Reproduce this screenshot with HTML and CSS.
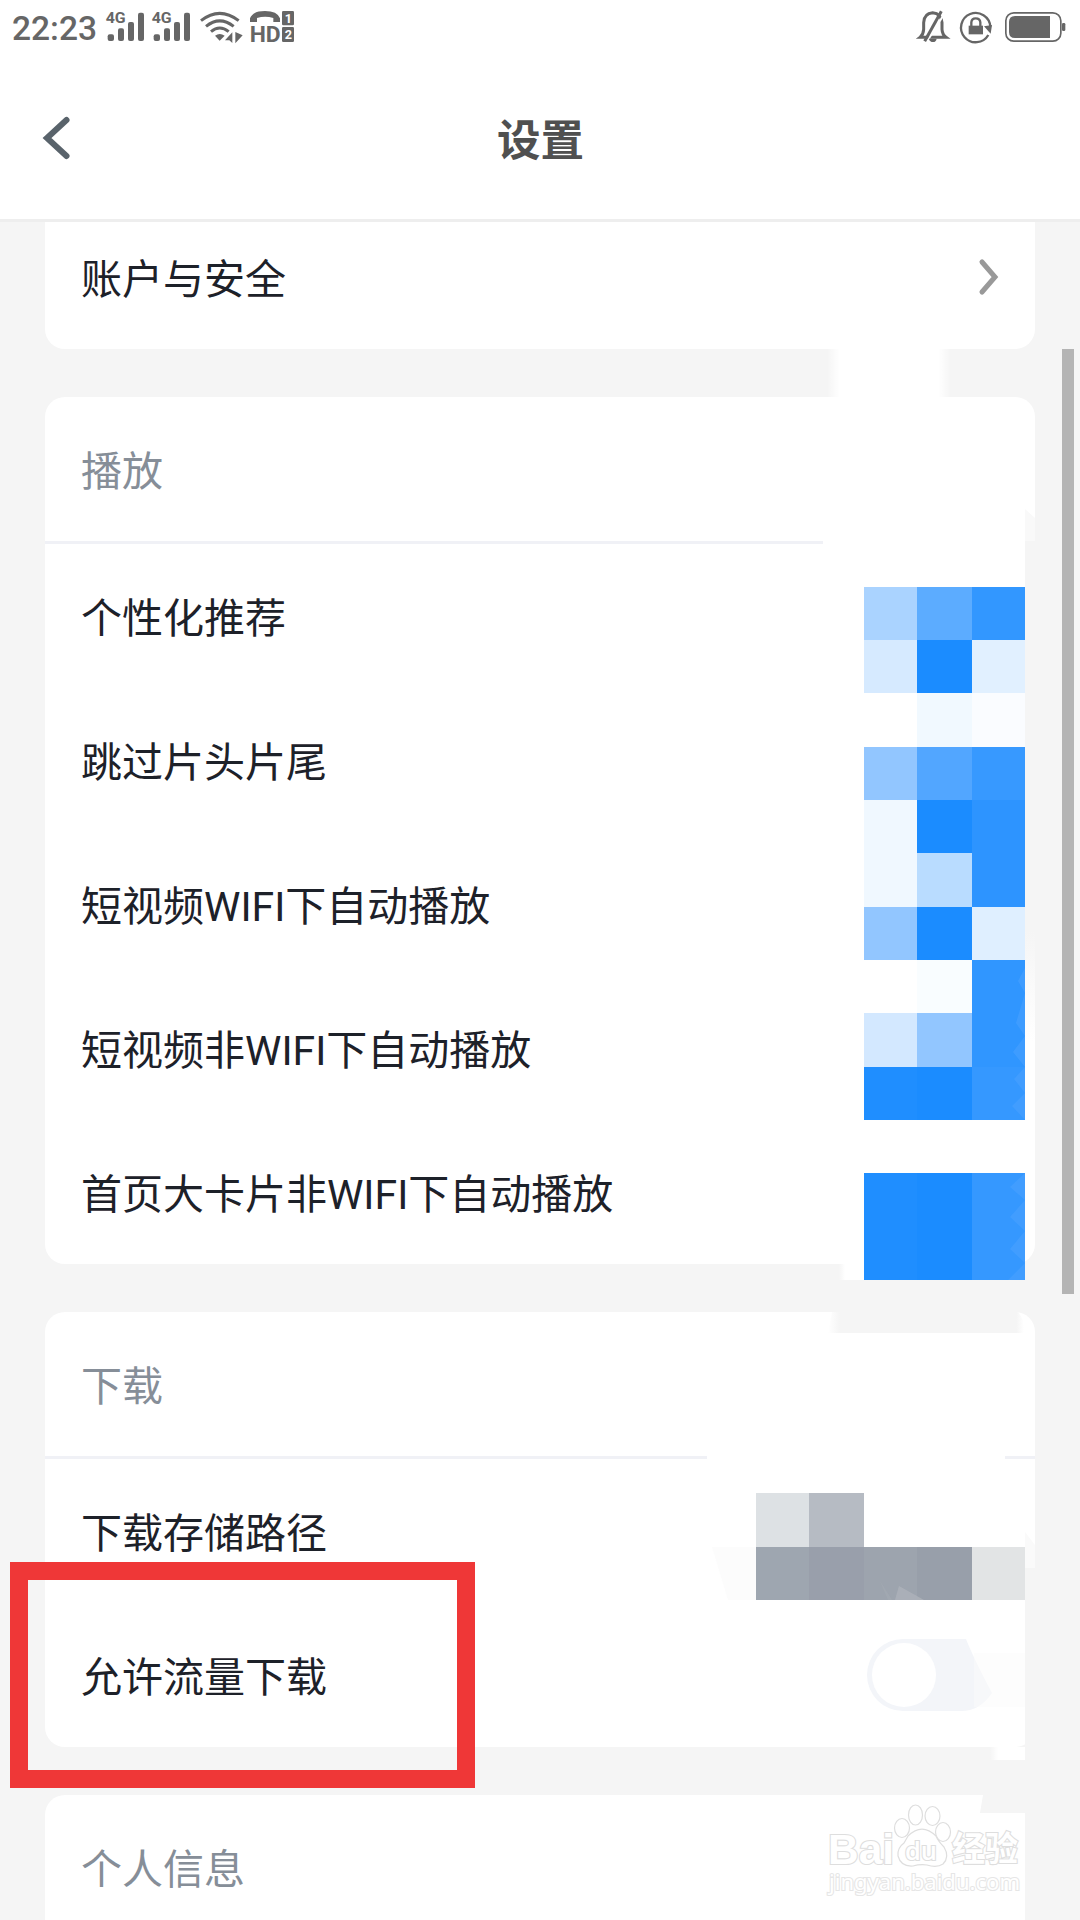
FILE: index.html
```html
<!DOCTYPE html>
<html lang="zh-CN">
<head>
<meta charset="utf-8">
<title>设置</title>
<link rel="stylesheet" href="styles.css">
</head>
<body>
<div class="screen">
  <div class="status">
    <div class="status-left">
      <span class="clock">22:23</span>
      <svg class="signal" viewBox="315 30 120 102">
        <text class="net" x="317" y="70" textLength="60" lengthAdjust="spacingAndGlyphs">4G</text>
        <rect x="323" y="103" width="19" height="20" rx="6"/><rect x="354" y="85" width="18" height="38" rx="6"/><rect x="384" y="66" width="18" height="57" rx="6"/><rect x="414" y="38" width="18" height="85" rx="6"/>
      </svg>
      <svg class="signal" viewBox="453 30 120 102">
        <text class="net" x="455" y="70" textLength="60" lengthAdjust="spacingAndGlyphs">4G</text>
        <rect x="461" y="103" width="19" height="20" rx="6"/><rect x="492" y="85" width="18" height="38" rx="6"/><rect x="522" y="66" width="18" height="57" rx="6"/><rect x="552" y="38" width="18" height="85" rx="6"/>
      </svg>
      <svg class="wifi" viewBox="597 30 135 102">
        <path class="line" d="M603 62Q659 18 716 62M618 79Q659 46 701 79M633 95Q659 73 686 95"/>
        <path d="M645 107Q659 97 674 107L659 122Z"/>
        <path d="M675 121L697 97V129L688 121ZM706 96L728 106L706 130Z"/>
      </svg>
      <svg class="hd" viewBox="747 30 138 102">
        <path d="M750 66V55Q758 33 795 33Q832 33 840 55V66H820V54Q795 46 771 54V66Z"/>
        <text class="hd-text" x="749" y="126" textLength="93" lengthAdjust="spacingAndGlyphs">HD</text>
        <rect x="846" y="33" width="36" height="43" rx="4"/><rect x="846" y="81" width="36" height="45" rx="4"/>
        <text class="sim" x="854" y="69">1</text><text class="sim" x="854" y="118">2</text>
      </svg>
    </div>
    <div class="status-right">
      <svg class="bell" viewBox="51 27 96 105">
        <path class="line" d="M60 112Q70 104 71 88V68Q72 40 98 38Q124 40 126 68V88Q127 104 138 112Z"/>
        <path class="slash-gap" d="M84 120L134 40"/><path class="line" d="M74 124L124 34"/>
        <path d="M86 116H110Q108 126 99 126Q90 126 86 116Z"/>
      </svg>
      <svg class="lock" viewBox="177 30 102 102">
        <path class="ring" d="M265 105A44 44 0 1 1 271 80"/>
        <path d="M252 79L276 75L272 101Z"/><rect x="206" y="77" width="43" height="26"/>
        <path class="ring" d="M214 78V67Q215 55 227 55Q240 55 241 67V78"/>
      </svg>
      <svg class="battery" viewBox="312 33 186 96">
        <rect class="case" x="317.500" y="38.500" width="165" height="85" rx="24"/>
        <path d="M345 48H450V114H345Q327 114 327 96V66Q327 48 345 48Z"/>
        <rect x="486" y="69" width="10" height="24" rx="4"/>
      </svg>
    </div>
  </div>

  <header class="bar">
    <svg class="back" viewBox="0 0 28 44"><path d="M23.500 4L4 22L23.500 40"/></svg>
    <h1>设置</h1>
  </header>

  <main class="content">
    <section class="card card-first">
      <div class="row"><span>账户与安全</span><svg class="chevron" viewBox="0 0 20 36"><path d="M3 3L16 18L3 33"/></svg></div>
    </section>
    <section class="card">
      <h2>播放</h2>
      <div class="row"><span>个性化推荐</span></div>
      <div class="row"><span>跳过片头片尾</span></div>
      <div class="row"><span>短视频WIFI下自动播放</span></div>
      <div class="row"><span>短视频非WIFI下自动播放</span></div>
      <div class="row"><span>首页大卡片非WIFI下自动播放</span></div>
    </section>
    <section class="card">
      <h2>下载</h2>
      <div class="row"><span>下载存储路径</span></div>
      <div class="row"><span>允许流量下载</span><svg class="toggle" viewBox="0 0 132 72"><path d="M36 0H99Q106 18 125 54Q113 72 94 72H36A36 36 0 0 1 36 0Z"/><circle cx="37" cy="36" r="32"/></svg></div>
    </section>
    <section class="card card-last"><h2>个人信息</h2></section>
  </main>

  <div class="scrollbar"></div>

  <svg class="overlay" viewBox="0 0 1080 1920">
    <defs>
      <linearGradient id="edge" x1="0" x2="1" y1="0" y2="0"><stop offset="0" stop-color="#fff" stop-opacity="0"/><stop offset=".1" stop-color="#fff"/><stop offset=".9" stop-color="#fff"/><stop offset="1" stop-color="#fff" stop-opacity="0"/></linearGradient>
      <linearGradient id="left" x1="0" x2="1" y1="0" y2="0"><stop offset="0" stop-color="#fff" stop-opacity="0"/><stop offset="1" stop-color="#fff"/></linearGradient>
      <linearGradient id="grey" x1="0" x2="1" y1="0" y2="0"><stop offset="0" stop-color="#f5f5f5" stop-opacity="0"/><stop offset=".06" stop-color="#f5f5f5"/><stop offset=".96" stop-color="#f5f5f5"/><stop offset="1" stop-color="#f5f5f5" stop-opacity="0"/></linearGradient>
      <linearGradient id="strip" x1="0" x2="0" y1="0" y2="1"><stop offset="0" stop-color="#f5f5f5"/><stop offset="1" stop-color="#f5f5f5" stop-opacity="0"/></linearGradient>
    </defs>
    <rect x="827" y="349" width="124" height="48" fill="url(#edge)"/>
    <rect x="823" y="540" width="202" height="5" fill="#fff"/>
    <path d="M1025 509L1035 518V541H1025Z" fill="#f9f9f9"/>
    <rect x="1025" y="541" width="10" height="390" fill="#f5f5f5"/>
    <rect x="1025" y="931" width="10" height="110" fill="url(#strip)"/>
    <rect x="839" y="1264" width="6" height="16" fill="url(#left)"/><rect x="845" y="1264" width="180" height="16" fill="#fff"/>
    <path d="M832 1312H1018Q1025 1320 1024 1333H828Z" fill="url(#grey)"/>
    <rect x="707" y="1455" width="298" height="5" fill="#fff"/>
    <path d="M1025 1532L1035 1545V1568H1025Z" fill="#fafafa"/>
    <rect x="1025" y="1568" width="11" height="179" fill="#f5f5f5"/>
    <rect x="990" y="1747" width="8" height="13" fill="url(#left)"/><rect x="998" y="1747" width="27" height="13" fill="#fff"/>
    <path d="M983 1795H1036V1920H1025V1813H980Z" fill="#f5f5f5"/>
    <path d="M712 1547H756V1600H728Z" fill="#fcfcfc"/>
    <rect x="974" y="1653" width="51" height="54" fill="#fcfcfc" fill-opacity=".5"/>

    <g shape-rendering="crispEdges">
      <rect x="864" y="587" width="53" height="53" fill="#aad3ff"/><rect x="917" y="587" width="55" height="53" fill="#5cacff"/><rect x="972" y="587" width="53" height="53" fill="#3297ff"/>
      <rect x="864" y="640" width="53" height="53" fill="#d6eaff"/><rect x="917" y="640" width="55" height="53" fill="#1b8cff"/><rect x="972" y="640" width="53" height="53" fill="#e1f0ff"/>
      <rect x="917" y="693" width="55" height="54" fill="#f1f9ff"/><rect x="972" y="693" width="53" height="54" fill="#fafcff"/>
      <rect x="864" y="747" width="53" height="53" fill="#92c6ff"/><rect x="917" y="747" width="55" height="53" fill="#52a6ff"/><rect x="972" y="747" width="53" height="53" fill="#3799ff"/>
      <rect x="864" y="800" width="53" height="107" fill="#f0f8ff"/><rect x="917" y="800" width="55" height="53" fill="#1b8cff"/><rect x="972" y="800" width="53" height="107" fill="#2d94ff"/>
      <rect x="917" y="853" width="55" height="54" fill="#b9dcff"/>
      <rect x="864" y="907" width="53" height="53" fill="#92c6ff"/><rect x="917" y="907" width="55" height="53" fill="#1b8cff"/><rect x="972" y="907" width="53" height="53" fill="#dfefff"/>
      <rect x="917" y="960" width="55" height="53" fill="#f9fdff"/><rect x="972" y="960" width="53" height="107" fill="#3096ff"/>
      <rect x="864" y="1013" width="53" height="54" fill="#d3e8ff"/><rect x="917" y="1013" width="55" height="54" fill="#92c6ff"/>
      <rect x="864" y="1067" width="53" height="53" fill="#1f8eff"/><rect x="917" y="1067" width="55" height="53" fill="#1b8cff"/><rect x="972" y="1067" width="53" height="53" fill="#3598ff"/>
      <rect x="864" y="1173" width="53" height="107" fill="#1f8eff"/><rect x="917" y="1173" width="55" height="107" fill="#1b8cff"/><rect x="972" y="1173" width="53" height="107" fill="#3598ff"/>
      <rect x="756" y="1493" width="53" height="54" fill="#dde1e4"/><rect x="809" y="1493" width="55" height="54" fill="#b6bbc3"/>
      <rect x="756" y="1547" width="53" height="53" fill="#9ea6b0"/><rect x="809" y="1547" width="55" height="53" fill="#999fab"/><rect x="864" y="1547" width="53" height="53" fill="#9da4ae"/><rect x="917" y="1547" width="55" height="53" fill="#989faa"/><rect x="972" y="1547" width="53" height="53" fill="#e2e4e5"/>
    </g>
    <path d="M1025 968L1018 981L1025 993L1016 1023L1025 1036L1013 1052L1025 1067L1014 1079L1025 1093L1012 1106L1025 1120ZM1025 1173L1010 1187L1025 1200L1010 1217L1025 1231L1010 1249L1025 1263L1008 1280H1025Z" fill="#4ba3ff" fill-opacity=".55"/>
    <path d="M895 1600L899 1586L924 1600Z" fill="#adb2ba" fill-opacity=".85"/>
    <path d="M888 1600L880 1581L892 1600Z" fill="#adb2ba" fill-opacity=".3"/>

    <g class="watermark">
      <text class="wm-bold" x="828" y="1864" font-size="42" textLength="66" lengthAdjust="spacingAndGlyphs">Bai</text>
      <ellipse cx="902" cy="1828" rx="7.500" ry="9.500"/><ellipse cx="915.500" cy="1815" rx="7" ry="10"/><ellipse cx="932.500" cy="1816" rx="7.500" ry="9.500"/><ellipse cx="943" cy="1832" rx="7.500" ry="9.500"/>
      <path d="M908 1836Q922 1822 936 1836Q938 1841 944 1847Q950 1857 943 1864Q937 1868 927 1865Q920 1864 913 1866Q901 1867 898 1856Q897 1848 904 1843Z"/>
      <text class="wm-du" x="905" y="1860" font-size="25" textLength="32" lengthAdjust="spacingAndGlyphs">du</text>
      <text class="wm-bold wm-cjk" x="952" y="1861" font-size="34" textLength="66" lengthAdjust="spacingAndGlyphs">经验</text>
      <text class="wm-url" x="829" y="1890" font-size="22" textLength="191" lengthAdjust="spacingAndGlyphs">jingyan.baidu.com</text>
    </g>
  </svg>
  <div class="highlight"></div>
</div>
</body>
</html>
```
FILE: styles.css
```css
* { box-sizing: border-box; }
body { margin: 0; background: #f5f5f5; }
.screen {
  position: relative;
  width: 1080px;
  height: 1920px;
  overflow: hidden;
  background: #f5f5f5;
  font-family: "Noto Sans CJK SC", sans-serif;
  color: #1d2129;
}
svg { display: block; flex: none; overflow: visible; }

.status {
  display: flex;
  justify-content: space-between;
  height: 60px;
  padding: 9px 14px 0 12px;
  background: #fff;
  fill: #666;
}
.status-left, .status-right { display: flex; align-items: flex-start; }
.clock {
  width: 93px;
  padding-top: 1px;
  font: 500 33.500px/38px Roboto, sans-serif;
  color: #666;
}
.signal { width: 40px; height: 34px; margin: 1px 6px 0 0; }
.wifi { width: 45px; height: 34px; margin: 1px 5px 0 2px; }
.hd { width: 46px; height: 34px; margin-top: 1px; }
.net { font: bold 43px Roboto, sans-serif; }
.hd-text { font: bold 68px Roboto, sans-serif; }
.sim { font: bold 38px Roboto, sans-serif; fill: #fff; }
.line, .ring, .case { fill: none; stroke: #666; stroke-width: 9; }
.ring { stroke-width: 7; }
.case { stroke-width: 5; }
.slash-gap { fill: none; stroke: #fff; stroke-width: 6; }
.bell { width: 32px; height: 35px; margin-right: 10px; }
.lock { width: 34px; height: 34px; margin: 1px 11px 0 0; }
.battery { width: 62px; height: 32px; margin-top: 2px; }

.bar {
  display: grid;
  grid-template-columns: 1fr auto 1fr;
  align-items: center;
  height: 162px;
  padding: 0 42px 4px 43px;
  border-bottom: 3px solid #eee;
  background: #fff;
}
.back { width: 28px; height: 44px; fill: none; stroke: #59636b; stroke-width: 6; stroke-linecap: round; }
h1 { margin: 0; font-size: 43.500px; line-height: 60px; font-weight: 700; color: #505050; }

.content { display: flex; flex-direction: column; gap: 48px; padding: 0 45px; }
.card { border-radius: 20px; background: #fff; }
.card-first { height: 127px; border-radius: 0 0 20px 20px; }
.card-last { height: 180px; }
h2, .row { margin: 0; padding: 0 36px; font-size: 41px; font-weight: 400; }
h2 {
  height: 147px;
  border-bottom: 3px solid #f0f1f6;
  line-height: 142px;
  color: #868e98;
}
.card-last h2 { border: 0; }
.row {
  display: flex;
  align-items: center;
  justify-content: space-between;
  height: 144px;
  font-family: Roboto, "Noto Sans CJK SC", sans-serif;
  line-height: 60px;
}
.row span { padding-top: 5px; }
.card-first .row { height: 110px; }
.chevron { width: 20px; height: 36px; fill: none; stroke: #999; stroke-width: 5; stroke-linecap: round; }
.toggle { width: 132px; height: 72px; fill: #f3f5f9; }
.toggle circle { fill: #fff; }

.scrollbar { position: absolute; left: 1062px; top: 349px; width: 12px; height: 945px; background: #b4b4b4; }
.overlay { position: absolute; left: 0; top: 0; width: 1080px; height: 1920px; }
.highlight { position: absolute; left: 10px; top: 1562px; width: 465px; height: 226px; border: 18px solid #ef3737; }

.watermark { fill: #fff; stroke: #dedede; stroke-width: 1.200; }
.watermark text { paint-order: stroke; stroke-width: 2.200; }
.wm-bold { font-family: "Liberation Sans", sans-serif; font-weight: 700; }
.watermark .wm-cjk { font-family: "Noto Sans CJK SC", sans-serif; }
.wm-du { font-family: "Open Sans", sans-serif; font-weight: 600; }
.watermark .wm-url { font-family: "Noto Sans", sans-serif; stroke: #e6e6e6; }
```
